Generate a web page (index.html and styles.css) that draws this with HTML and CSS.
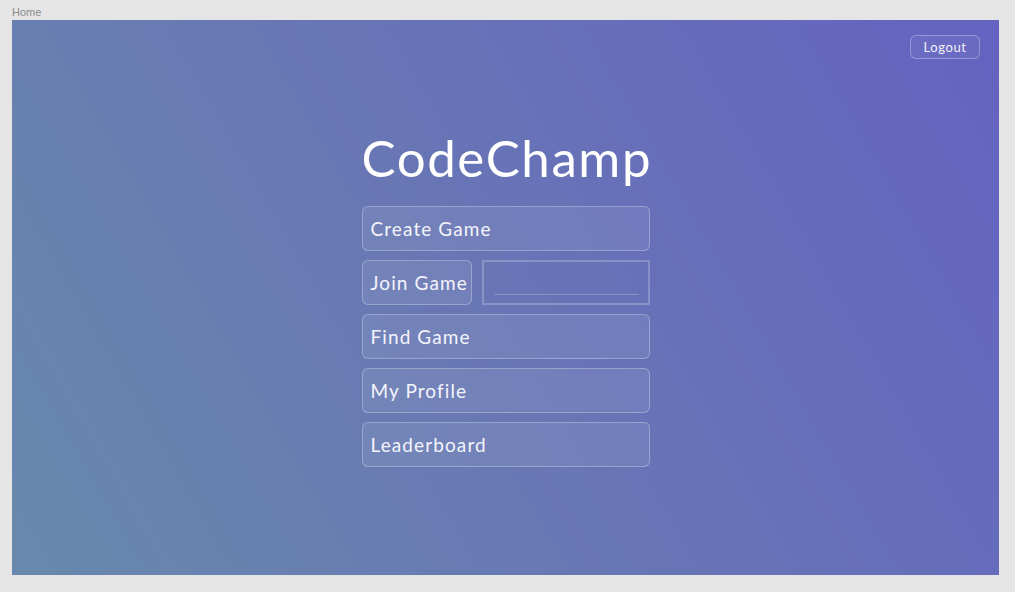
FILE: index.html
```html
<!DOCTYPE html>
<html>
<head>
<meta charset="utf-8">
<link rel="stylesheet" href="styles.css">
</head>
<body>
<div class="label">Home</div>
<div class="frame">
  <div class="topbar">
    <button class="logout">Logout</button>
  </div>
  <div class="menu">
    <h1 class="title">CodeChamp</h1>
    <button class="btn">Create Game</button>
    <div class="join-row">
      <button class="btn btn-join">Join Game</button>
      <div class="code-box"><div class="code-line"></div></div>
    </div>
    <button class="btn">Find Game</button>
    <button class="btn">My Profile</button>
    <button class="btn">Leaderboard</button>
  </div>
</div>
</body>
</html>
```
FILE: styles.css
```css
html, body {
  margin: 0;
  padding: 0;
  background: #e5e5e5;
  width: 1015px;
  height: 592px;
  overflow: hidden;
}
body {
  padding: 5px 0 0 12px;
  box-sizing: border-box;
  font-family: "Lato", "Noto Sans", sans-serif;
}
.label {
  font-family: "Liberation Sans", Arial, sans-serif;
  font-size: 11px;
  line-height: 15px;
  color: #8a8a8a;
}
.frame {
  width: 987px;
  height: 555px;
  background: linear-gradient(60deg, #6889ad 0%, #6877b4 45%, #6463c1 100%);
  display: flex;
  flex-direction: column;
  align-items: center;
}
.topbar {
  align-self: stretch;
  display: flex;
  justify-content: flex-end;
  padding: 15px 19px 0 0;
}
.logout {
  font-family: inherit;
  width: 70px;
  height: 24px;
  border: 1px solid rgba(255,255,255,0.3);
  border-radius: 6px;
  background: rgba(255,255,255,0.04);
  color: #f2f2fa;
  font-size: 13px;
  letter-spacing: 0.6px;
  padding: 0;
}
.menu {
  width: 288px;
  display: flex;
  flex-direction: column;
  gap: 9px;
  margin-top: 73px;
}
.title {
  margin: 0 0 13px 0;
  font-weight: 400;
  font-size: 51px;
  line-height: 52px;
  color: #ffffff;
  text-align: center;
  letter-spacing: 1.6px;
}
.btn {
  font-family: inherit;
  height: 45px;
  box-sizing: border-box;
  border: 1.5px solid rgba(255,255,255,0.28);
  border-radius: 6px;
  background: rgba(255,255,255,0.08);
  color: #f4f4fb;
  font-size: 19px;
  letter-spacing: 1.1px;
  text-align: left;
  padding: 0 0 0 8px;
}
.join-row {
  display: flex;
  gap: 10px;
}
.btn-join {
  width: 110px;
  flex: none;
}
.code-box {
  flex: 1;
  height: 45px;
  box-sizing: border-box;
  border: 2px solid rgba(255,255,255,0.22);
  display: flex;
  align-items: flex-end;
  padding: 0 9px 8px 10px;
}
.code-line {
  flex: 1;
  height: 1px;
  background: rgba(255,255,255,0.22);
}
```
